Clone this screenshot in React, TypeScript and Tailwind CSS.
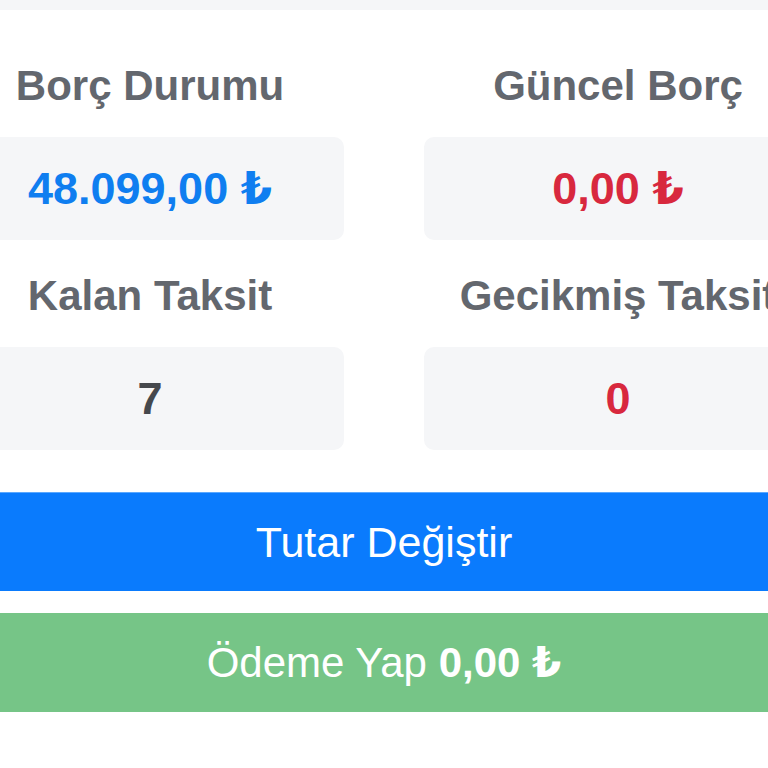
import React from "react";

type Stat = {
  label: string;
  value: string;
  tone: "blue" | "red" | "dark";
};

const toneClass = {
  blue: "text-[#0f7ef0]",
  red: "text-[#d8283e]",
  dark: "text-[#45484d]",
};

const rows: Stat[][] = [
  [
    { label: "Borç Durumu", value: "48.099,00 ₺", tone: "blue" },
    { label: "Güncel Borç", value: "0,00 ₺", tone: "red" },
  ],
  [
    { label: "Kalan Taksit", value: "7", tone: "dark" },
    { label: "Gecikmiş Taksit", value: "0", tone: "red" },
  ],
];

const StatCell = ({ stat }: { stat: Stat }) => (
  <div className="flex w-[388px] shrink-0 flex-col items-center">
    <h3 className="whitespace-nowrap text-[42px] font-bold leading-[50px] text-[#63676e]">
      {stat.label}
    </h3>
    <div className="mt-[26px] flex h-[103px] w-full items-center justify-center rounded-[10px] bg-[#f5f6f8]">
      <span className={`text-[45px] font-bold leading-none ${toneClass[stat.tone]}`}>
        {stat.value}
      </span>
    </div>
  </div>
);

const App = () => {
  return (
    <div className="h-[768px] w-[768px] overflow-hidden bg-white font-['Liberation_Sans',Arial,'DejaVu_Sans',sans-serif]">
      {/* header strip */}
      <div className="h-[10px] bg-[#f5f6f8]" />

      {/* summary grid */}
      <div className="ml-[-44px] mt-[51px] flex flex-col gap-[31px]">
        {rows.map((row, i) => (
          <div key={i} className="flex gap-[80px]">
            {row.map((stat) => (
              <StatCell key={stat.label} stat={stat} />
            ))}
          </div>
        ))}
      </div>

      {/* actions */}
      <div className="mt-[42px] flex flex-col gap-[22px]">
        <button className="flex h-[99px] w-full items-center justify-center border-t border-[#5aa8ff] bg-[#0a7bfd] text-[43px] text-white">
          Tutar Değiştir
        </button>
        <button className="flex h-[99px] w-full items-center justify-center bg-[#76c587] text-[42px] text-white">
          Ödeme Yap&nbsp;<b className="font-bold">0,00 ₺</b>
        </button>
      </div>
    </div>
  );
};

export default App;
